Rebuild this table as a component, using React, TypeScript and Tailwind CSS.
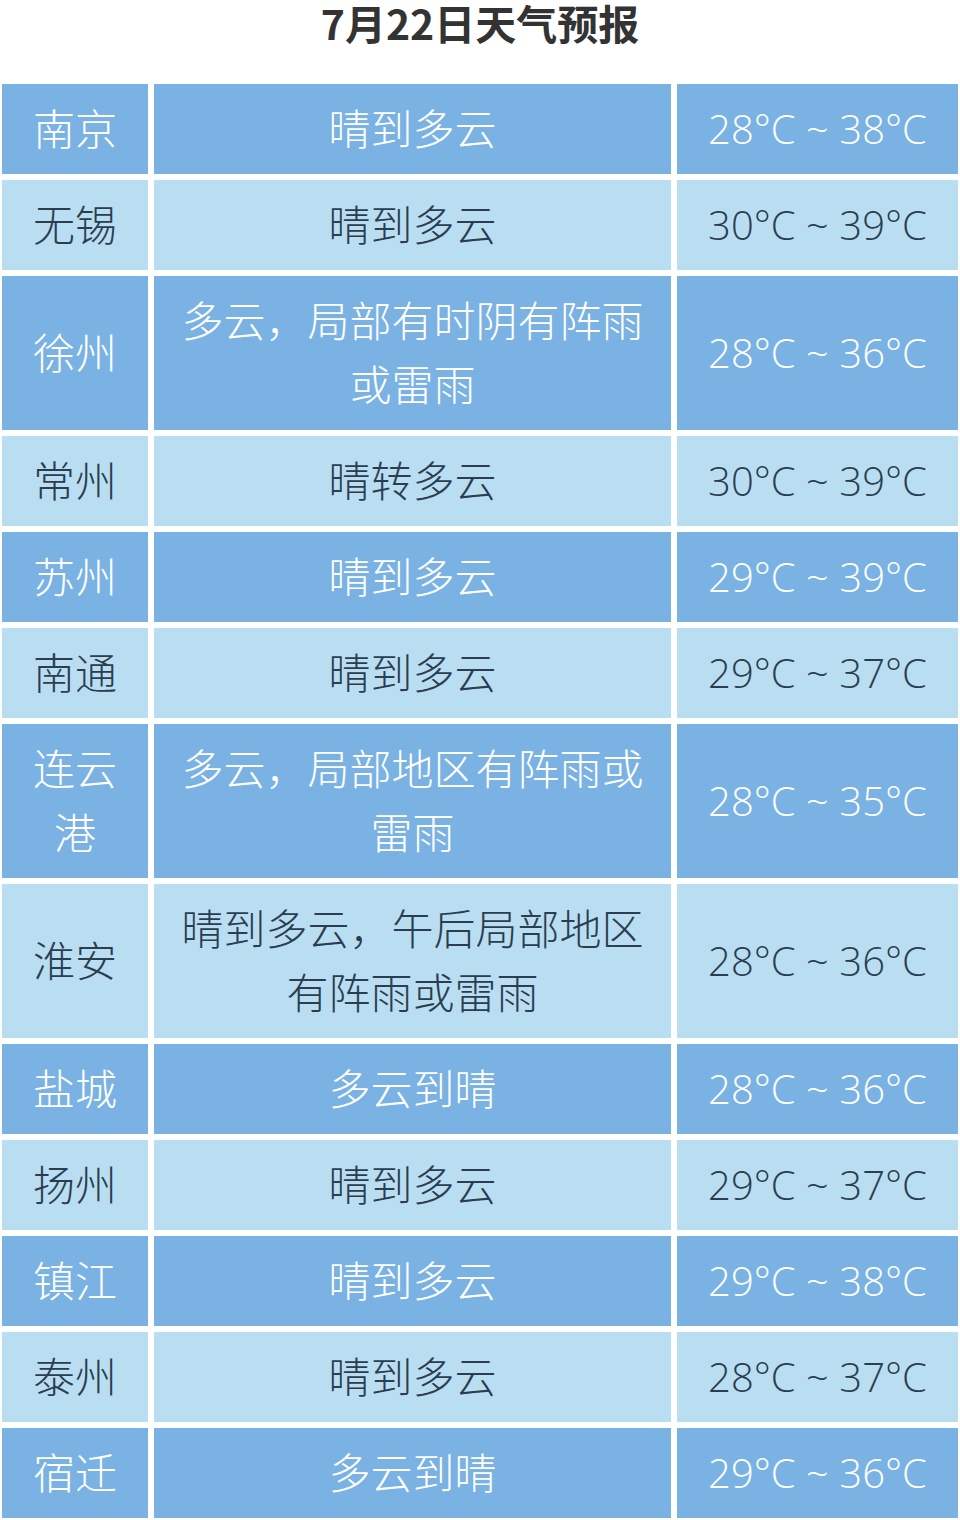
const rows: { city: string; weather: string; temp: string }[] = [
  { city: "南京", weather: "晴到多云", temp: "28°C ~ 38°C" },
  { city: "无锡", weather: "晴到多云", temp: "30°C ~ 39°C" },
  { city: "徐州", weather: "多云，局部有时阴有阵雨或雷雨", temp: "28°C ~ 36°C" },
  { city: "常州", weather: "晴转多云", temp: "30°C ~ 39°C" },
  { city: "苏州", weather: "晴到多云", temp: "29°C ~ 39°C" },
  { city: "南通", weather: "晴到多云", temp: "29°C ~ 37°C" },
  { city: "连云港", weather: "多云，局部地区有阵雨或雷雨", temp: "28°C ~ 35°C" },
  { city: "淮安", weather: "晴到多云，午后局部地区有阵雨或雷雨", temp: "28°C ~ 36°C" },
  { city: "盐城", weather: "多云到晴", temp: "28°C ~ 36°C" },
  { city: "扬州", weather: "晴到多云", temp: "29°C ~ 37°C" },
  { city: "镇江", weather: "晴到多云", temp: "29°C ~ 38°C" },
  { city: "泰州", weather: "晴到多云", temp: "28°C ~ 37°C" },
  { city: "宿迁", weather: "多云到晴", temp: "29°C ~ 36°C" },
];

const App = () => {
  return (
    <div className="w-[960px] h-[1520px] overflow-hidden bg-white font-['Noto_Sans_CJK_SC',sans-serif]">
      <h1 className="h-[84px] text-center text-[41px] leading-[44px] font-bold text-[#333333]">
        7月22日天气预报
      </h1>

      <div className="grid grid-cols-[146px_517px_281px] gap-[6px] pl-[2px] text-[42px] leading-[64px] font-light">
        {rows.map((r, i) => {
          const dark = i % 2 === 0;
          const cell = dark
            ? "bg-[#7ab2e3] text-white"
            : "bg-[#b9def2] text-[#2b3d4f]";
          return [
            <div
              key={`c${i}`}
              className={`${cell} flex items-center justify-center text-center px-[14px] pt-[11px] pb-[15px]`}
            >
              {r.city}
            </div>,
            <div
              key={`w${i}`}
              className={`${cell} flex items-center justify-center text-center px-[20px] pt-[11px] pb-[15px]`}
            >
              {r.weather}
            </div>,
            <div
              key={`t${i}`}
              className={`${cell} flex items-center justify-center text-center pt-[13px] pb-[13px] font-['Open_Sans','Noto_Sans_CJK_SC',sans-serif] text-[40px]`}
            >
              {r.temp}
            </div>,
          ];
        })}
      </div>
    </div>
  );
};

export default App;
